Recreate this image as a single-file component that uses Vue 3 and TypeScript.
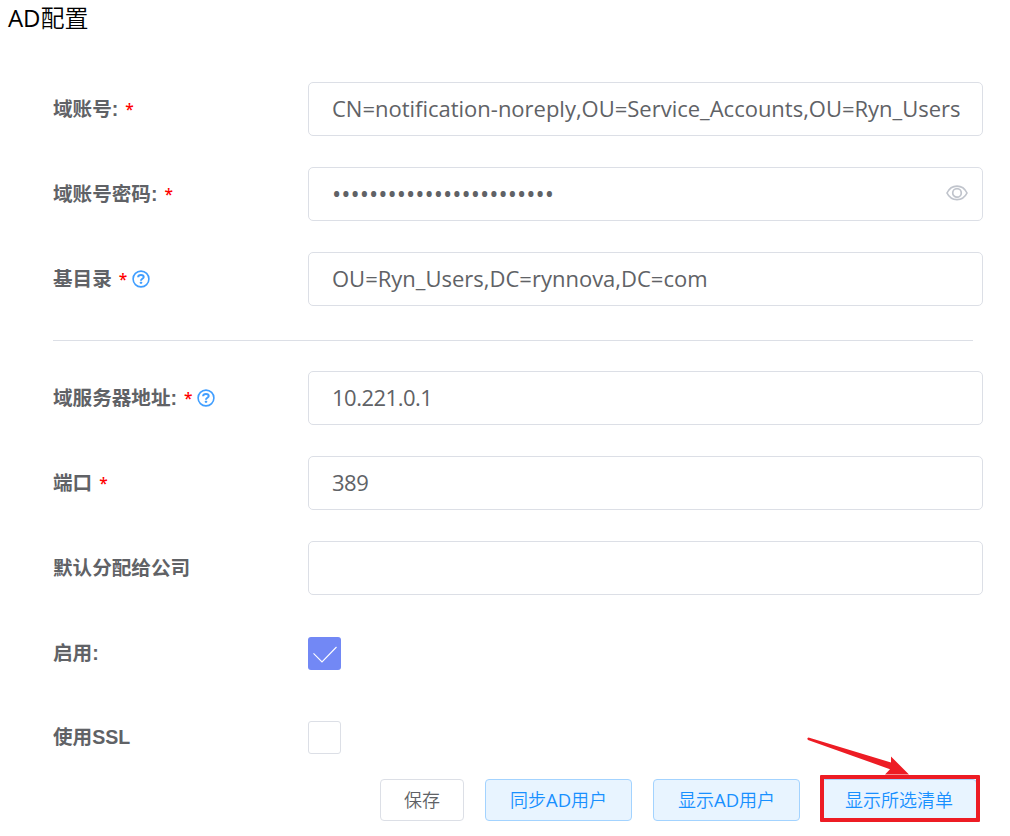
<script setup lang="ts">
interface Field {
  label: string
  value?: string
  required?: boolean
  help?: boolean
  kind: 'text' | 'password' | 'checkbox'
  checked?: boolean
  cls?: string
}

const directoryFields: Field[] = [
  { label: '域账号:', value: 'CN=notification-noreply,OU=Service_Accounts,OU=Ryn_Users', required: true, kind: 'text', cls: 'account' },
  { label: '域账号密码:', value: '•'.repeat(24), required: true, kind: 'password' },
  { label: '基目录', value: 'OU=Ryn_Users,DC=rynnova,DC=com', required: true, help: true, kind: 'text' },
]

const serverFields: Field[] = [
  { label: '域服务器地址:', value: '10.221.0.1', required: true, help: true, kind: 'text', cls: 'digits' },
  { label: '端口', value: '389', required: true, kind: 'text', cls: 'digits' },
  { label: '默认分配给公司', value: '', kind: 'text' },
  { label: '启用:', kind: 'checkbox', checked: true },
  { label: '使用SSL', kind: 'checkbox', checked: false },
]

const groups = [directoryFields, serverFields]
</script>

<template>
  <main class="page">
    <h1 class="title"><span class="latin">AD</span>配置</h1>
    <form class="form" @submit.prevent>
      <section v-for="(fields, g) in groups" :key="g" class="group">
        <div v-for="f in fields" :key="f.label" class="row" :class="f.kind">
          <div class="label">
            <span>{{ f.label }}</span>
            <span v-if="f.required" class="star">*</span>
            <svg v-if="f.help" class="help" viewBox="0 0 18 18">
              <circle cx="9" cy="9" r="7.9" fill="none" stroke="#409eff" stroke-width="1.6" />
              <path d="M6.1 7.2C6.2 5.500 7.300 4.900 9 4.900c1.700 0 2.700.8 2.700 2.100 0 1.800-2.700 1.700-2.700 3.700" fill="none" stroke="#409eff" stroke-width="2" />
              <rect x="7.900" y="11.800" width="2.200" height="2" rx=".5" fill="#409eff" />
            </svg>
          </div>
          <span v-if="f.kind === 'checkbox'" class="check" :class="{ on: f.checked }">
            <svg v-if="f.checked" viewBox="0 0 33 33">
              <path d="M5.5 16.3 14 25 28.5 10" fill="none" stroke="#fff" stroke-width="1.1" />
            </svg>
          </span>
          <div v-else class="input">
            <span class="value" :class="[f.kind === 'password' ? 'dots' : '', f.cls]">{{ f.value }}</span>
            <svg v-if="f.kind === 'password'" class="eye" viewBox="0 0 22 16">
              <path d="M1 8C3.2 3.4 6.8 1.1 11 1.1S18.800 3.400 21 8c-2.200 4.600-5.800 6.600-10 6.600S3.200 12.600 1 8Z" />
              <circle cx="11" cy="7.900" r="4.300" />
            </svg>
          </div>
        </div>
      </section>
      <footer class="actions">
        <button class="btn plain">保存</button>
        <button class="btn primary">同步<span class="latin">AD</span>用户</button>
        <button class="btn primary">显示<span class="latin">AD</span>用户</button>
        <div class="marked">
          <button class="btn primary">显示所选清单</button>
          <span class="frame"></span>
          <svg class="arrow" viewBox="0 0 104 42">
            <path d="M1.500 .5 84 25.500V19.500L102 37.500H78l5-5.300L1 3Q-.5 1 1.500 .5Z" fill="#ed1c24" />
          </svg>
        </div>
      </footer>
    </form>
  </main>
</template>

<style>
body {
  margin: 0;
  background: #fff;
}
</style>

<style scoped>
.page {
  box-sizing: border-box;
  width: 1010px;
  height: 836px;
  overflow: hidden;
  background: #fff;
  color: #606266;
  font-family: "Open Sans", "Noto Sans CJK SC", sans-serif;
}
.title {
  margin: 0;
  padding: 1px 0 1px 8px;
  height: 80px;
  line-height: 34px;
  font-size: 24px;
  font-weight: 350;
  color: #000;
  white-space: nowrap;
}
.title .latin {
  font-weight: 400;
  letter-spacing: -.1px;
}
.form {
  padding-left: 53px;
}
.group {
  display: flex;
  flex-direction: column;
  gap: 31px;
}
.group + .group {
  margin-top: 34px;
  padding-top: 30px;
  width: 920px;
  border-top: 1px solid #dcdfe6;
}
.row {
  display: flex;
  align-items: center;
  width: 930px;
  height: 54px;
}
.row.checkbox + .row.checkbox {
  margin-top: -1px;
}
.label {
  display: flex;
  align-items: center;
  flex: none;
  width: 255px;
  font: bold 19.600px/28px "Liberation Sans", "Noto Sans CJK SC", sans-serif;
  white-space: nowrap;
}
.star {
  width: 9px;
  margin-left: 7px;
  font: 600 15.500px/28px "Open Sans", sans-serif;
  color: #f00;
}
.help {
  width: 18px;
  height: 18px;
  margin-left: 4px;
}
.input {
  box-sizing: border-box;
  display: flex;
  align-items: center;
  flex: 1;
  min-width: 0;
  height: 54px;
  padding: 0 22px 0 23px;
  border: 1px solid #dcdfe6;
  border-radius: 5px;
}
.value {
  flex: 1;
  min-width: 0;
  padding-bottom: 2px;
  overflow: hidden;
  white-space: nowrap;
  font-size: 22px;
  line-height: 32px;
}
.account {
  letter-spacing: -.01px;
}
.digits {
  letter-spacing: -.5px;
}
.dots {
  padding-bottom: 0;
  font-size: 24.600px;
}
.eye {
  flex: none;
  width: 22px;
  height: 16px;
  margin: 0 -8px 2px 0;
  fill: none;
  stroke: #c0c4cc;
  stroke-width: 1.700;
}
.check {
  box-sizing: border-box;
  width: 33px;
  height: 33px;
  border: 1px solid #dcdfe6;
  border-radius: 3px;
}
.check.on {
  border: 0;
  background: #7288f5;
}
.check svg {
  display: block;
}
.actions {
  display: flex;
  gap: 21px;
  margin-top: 15px;
  padding-left: 327px;
}
.btn {
  box-sizing: border-box;
  display: block;
  height: 42px;
  width: 147px;
  padding: 0;
  border: 1px solid #a3d3ff;
  border-radius: 4px;
  background: #e8f4ff;
  color: #1890ff;
  font: 350 18px/40px "Open Sans", "Noto Sans CJK SC", sans-serif;
  white-space: nowrap;
}
.btn .latin {
  font-size: 18.500px;
  font-weight: 400;
  line-height: 1;
}
.btn.plain {
  width: 84px;
  border-color: #dcdfe6;
  background: #fff;
  color: #606266;
}
.marked {
  position: relative;
}
.marked .btn {
  width: 156px;
}
.frame {
  position: absolute;
  box-sizing: border-box;
  left: -1px;
  top: -4px;
  width: 160px;
  height: 47px;
  border: 4px solid #ed1c24;
  border-radius: 1px;
}
.arrow {
  position: absolute;
  left: -14px;
  top: -42px;
  width: 104px;
  height: 42px;
}
</style>
